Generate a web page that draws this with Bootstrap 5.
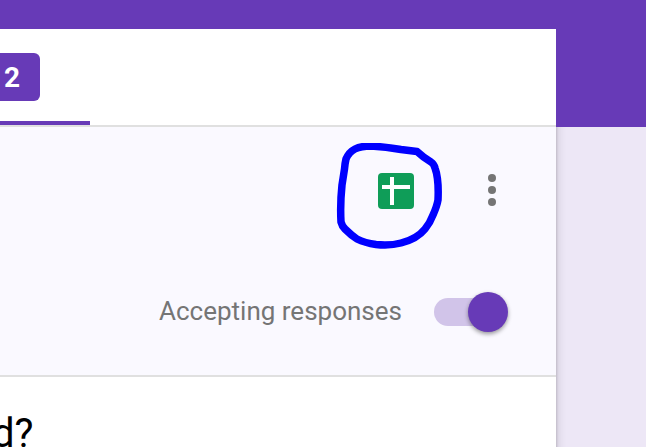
<!DOCTYPE html>
<html lang="en">
<head>
<meta charset="utf-8">
<meta name="viewport" content="width=device-width, initial-scale=1">
<title>Form responses</title>
<link href="https://cdn.jsdelivr.net/npm/bootstrap@5.3.0/dist/css/bootstrap.min.css" rel="stylesheet">
<style>
body{font-family:Roboto,"Liberation Sans",sans-serif;background:linear-gradient(#673ab7 127px,#ede7f6 127px);height:447px}
.sheet-wrap{width:556px;height:418px;margin-top:29px;background:#fff;position:relative}
.edge{left:0;top:98px;width:576px;height:320px}
.edge::before{content:"";display:block;width:556px;height:440px;margin-top:-60px;box-shadow:0 4px 10px rgba(0,0,0,.18),0 2px 3px rgba(0,0,0,.2)}
.tabs{height:98px;border-bottom:2px solid #e0e0e0}
.tab-active{width:90px;border-bottom:4px solid #673ab7;padding-top:24px}
.count{width:40px;height:48px;background:#673ab7;border-radius:0 6px 6px 0;font-size:28px;line-height:50px;font-weight:700;padding-left:4px}
.summary{height:250px;background:#faf9ff;border-bottom:2px solid #e0e0e0}
.tools{height:126px;padding:16px 56px 0 0}
.ring{width:112px;height:106px;margin-right:38px}
.dots{width:16px;height:36px;margin-top:29px}
.accept{padding:39px 48px 0 0}
.accept-label{font-size:26px;line-height:40px;margin-top:-2px;color:#757575}
.toggle{width:74px;height:40px;margin-left:32px}
.track{width:60px;height:28px;border-radius:14px;background:#d1c4e9}
.accept .toggle{width:74px}
.knob{width:40px;height:40px;margin-left:-26px;background:#673ab7;box-shadow:0 2px 4px rgba(0,0,0,.4)}
.question{height:70px;font-size:40px;line-height:48px;color:#000;padding-top:33px}
.question span{display:block;margin-left:-8px}
</style>
</head>
<body class="overflow-hidden">
<div class="d-flex flex-column">
<main class="sheet-wrap">
<div class="edge position-absolute overflow-hidden" aria-hidden="true"></div>
<div class="position-relative bg-white">
<nav class="tabs d-flex"><div class="tab-active"><div class="count text-white">2</div></div></nav>
<section class="summary">
<div class="tools d-flex justify-content-end">
<svg class="ring" viewBox="334 143 112 106" aria-label="Spreadsheet">
<rect x="378" y="173" width="36" height="36" rx="4" fill="#0f9d58"/>
<path d="M382 187H410M392 177V205" stroke="#fff" stroke-width="4"/>
<path d="M371 146Q361 146 355 149Q349 152 346 159Q345 163 344.500 169L342 185Q340 204 341 222Q342 226 345 229Q351 235 357 239Q365 243 376 244.500Q390 246 401 243Q417 239 425 229Q430 223 433 215Q437 206 438 200Q439 179 435 168Q434 164 431 162Q424 158 417 151.500L401 149.500Q386 147 371 146Z" fill="none" stroke="#00f" stroke-width="7.5" stroke-linejoin="round"/>
</svg>
<svg class="dots" viewBox="0 0 16 36" fill="#757575" aria-label="More"><circle cx="8" cy="6" r="4"/><circle cx="8" cy="18" r="4"/><circle cx="8" cy="30" r="4"/></svg>
</div>
<div class="accept d-flex justify-content-end align-items-center">
<span class="accept-label">Accepting responses</span>
<div class="toggle d-flex align-items-center"><div class="track flex-shrink-0"></div><div class="knob rounded-circle flex-shrink-0"></div></div>
</div>
</section>
<section class="question overflow-hidden bg-white"><span>d?</span></section>
</div>
</main>
</div>
<script src="https://cdn.jsdelivr.net/npm/bootstrap@5.3.0/dist/js/bootstrap.bundle.min.js"></script>
</body>
</html>
